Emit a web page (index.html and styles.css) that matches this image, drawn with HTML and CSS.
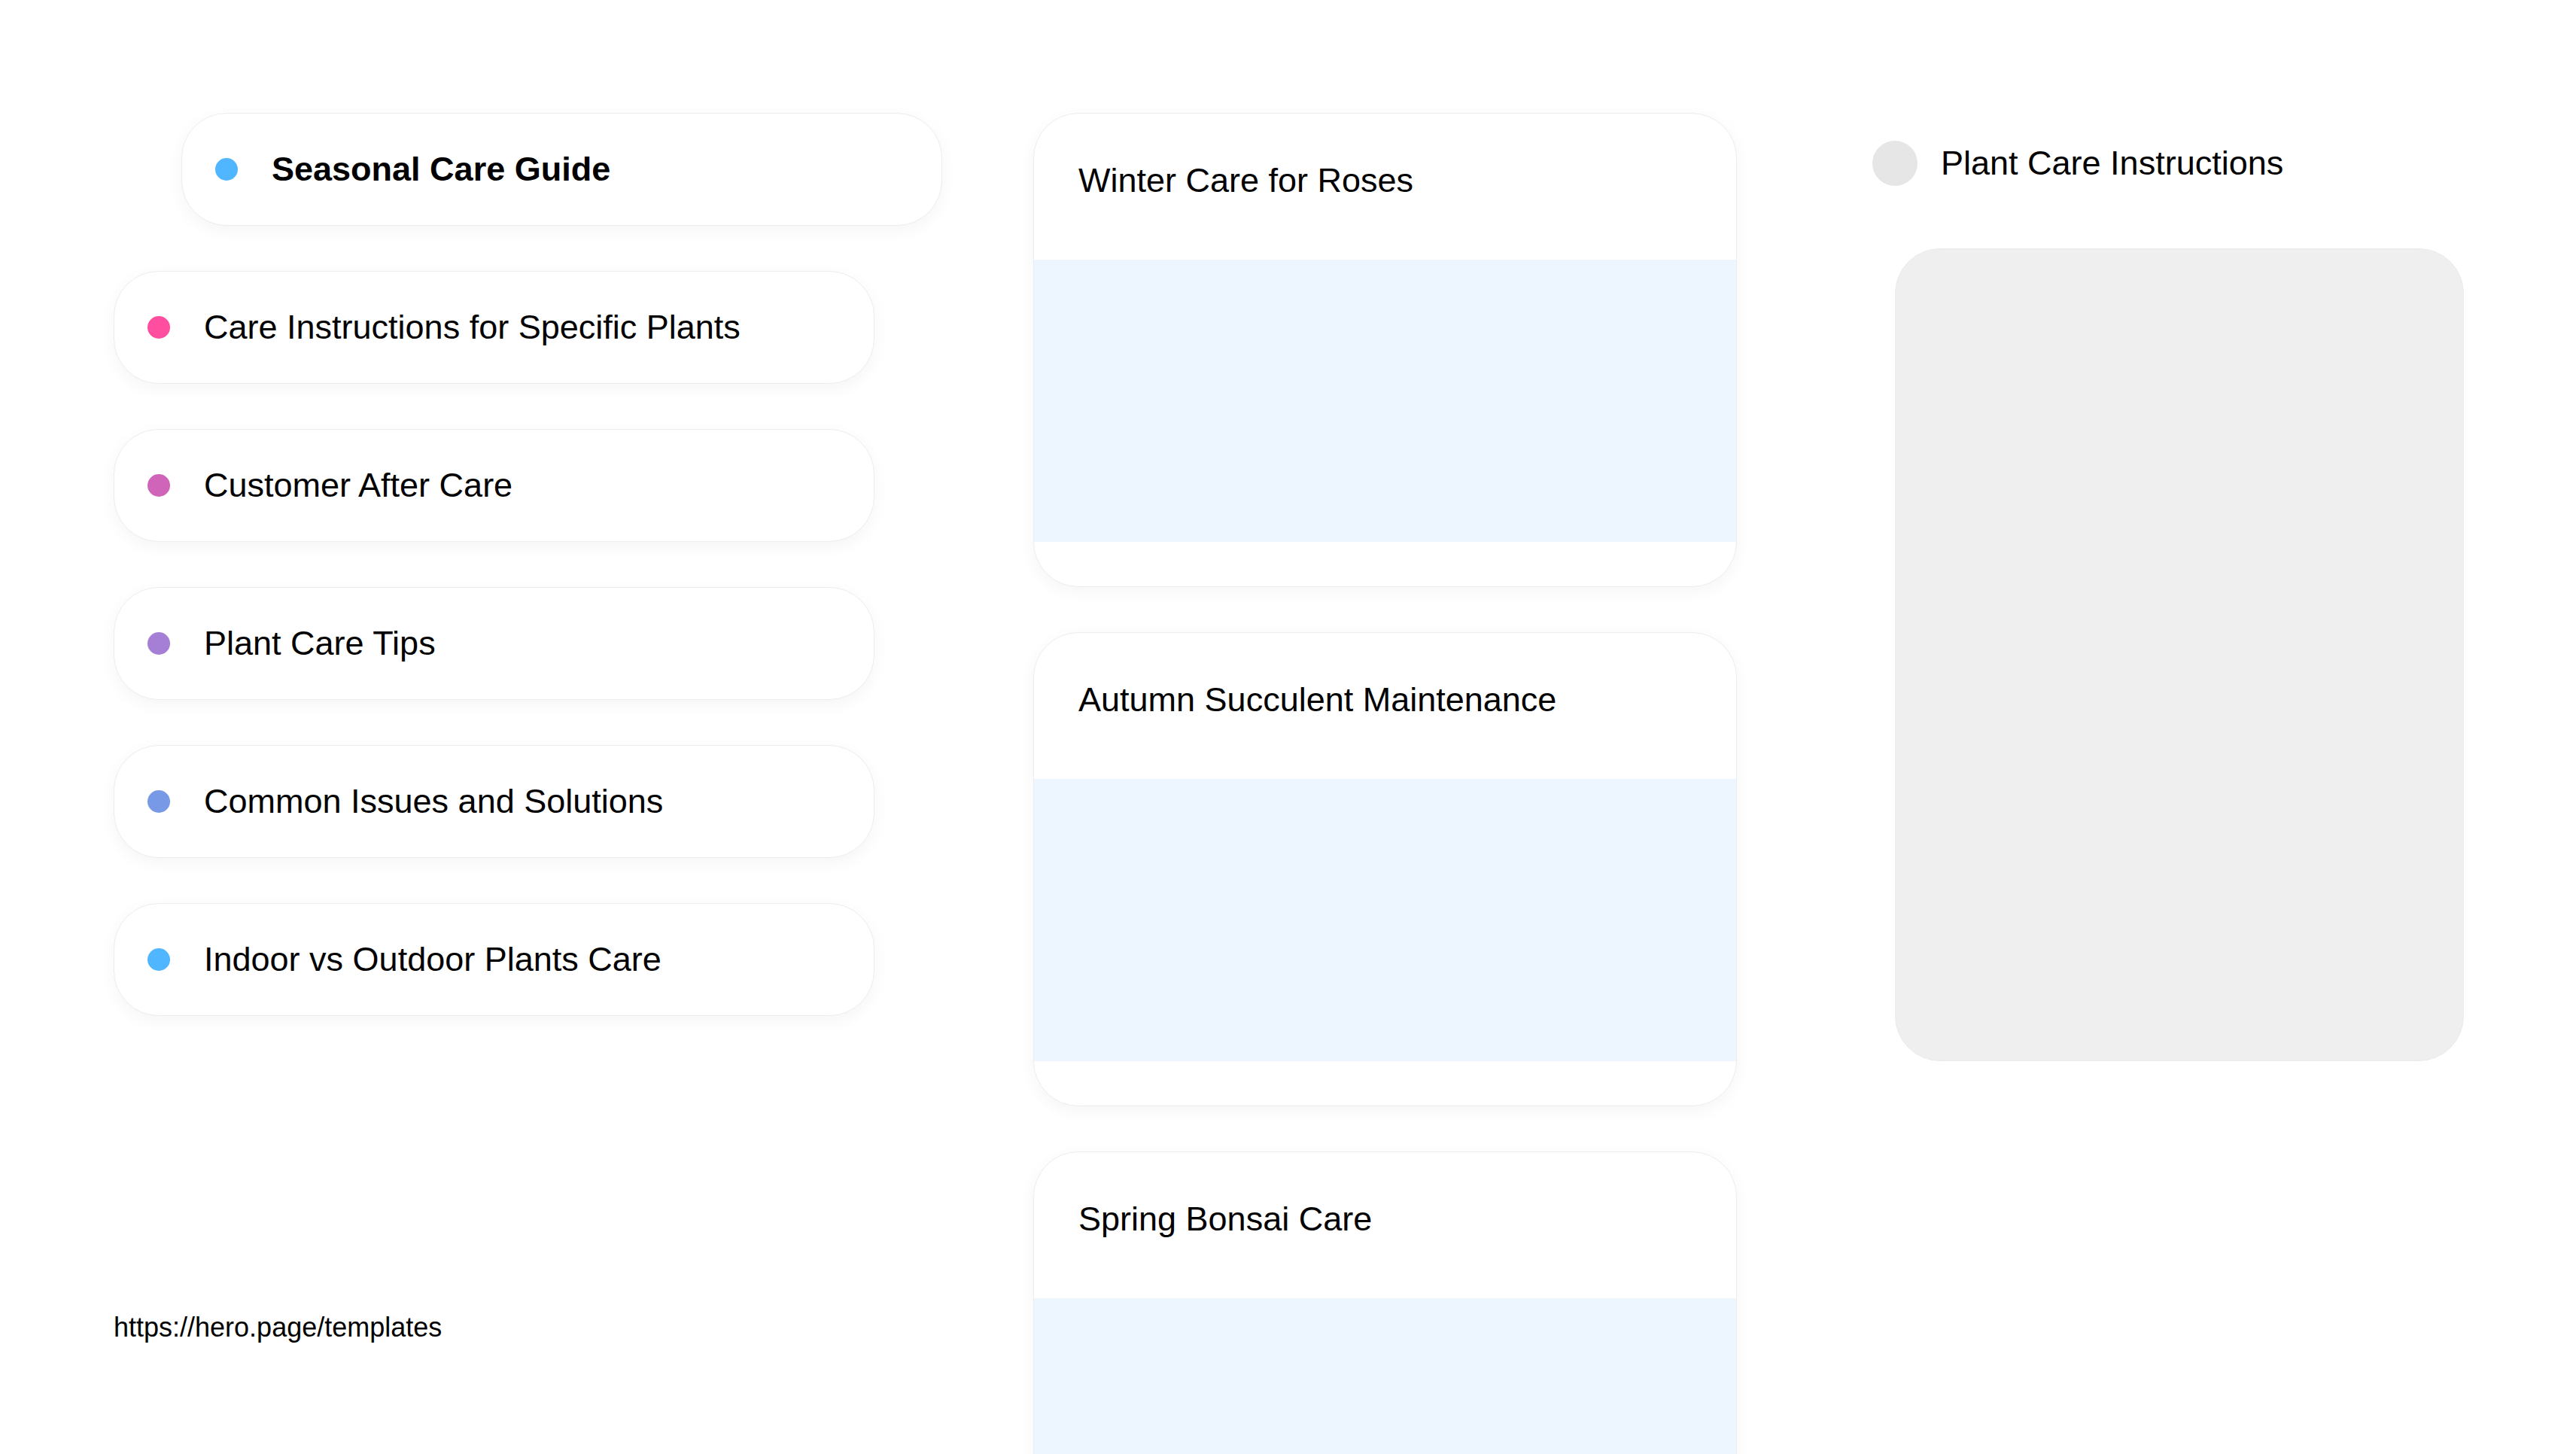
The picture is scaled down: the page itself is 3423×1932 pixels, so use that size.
FILE: index.html
```html
<!DOCTYPE html>
<html lang="en">
<head>
<meta charset="utf-8">
<title>Plant Care</title>
<link rel="stylesheet" href="styles.css">
</head>
<body>
<div class="page">
  <div class="col-left">
    <div class="nav-list">
      <div class="nav-card nav-card--active"><span class="dot dot-blue"></span><span class="nav-label nav-label--bold">Seasonal Care Guide</span></div>
      <div class="nav-card"><span class="dot dot-pink"></span><span class="nav-label">Care Instructions for Specific Plants</span></div>
      <div class="nav-card"><span class="dot dot-magenta"></span><span class="nav-label">Customer After Care</span></div>
      <div class="nav-card"><span class="dot dot-purple"></span><span class="nav-label">Plant Care Tips</span></div>
      <div class="nav-card"><span class="dot dot-periwinkle"></span><span class="nav-label">Common Issues and Solutions</span></div>
      <div class="nav-card"><span class="dot dot-blue"></span><span class="nav-label">Indoor vs Outdoor Plants Care</span></div>
    </div>
    <div class="url">https://hero.page/templates</div>
  </div>
  <div class="col-middle">
    <div class="post-card">
      <div class="post-head">Winter Care for Roses</div>
      <div class="post-media"></div>
      <div class="post-foot"></div>
    </div>
    <div class="post-card">
      <div class="post-head">Autumn Succulent Maintenance</div>
      <div class="post-media"></div>
      <div class="post-foot"></div>
    </div>
    <div class="post-card">
      <div class="post-head">Spring Bonsai Care</div>
      <div class="post-media"></div>
      <div class="post-foot"></div>
    </div>
  </div>
  <div class="col-right">
    <div class="side-head"><span class="avatar"></span><span class="side-title">Plant Care Instructions</span></div>
    <div class="side-panel"></div>
  </div>
</div>
</body>
</html>
```
FILE: styles.css
```css
html, body {
  margin: 0;
  padding: 0;
  background: #ffffff;
  overflow: hidden;
}
body {
  font-family: "Liberation Sans", Arial, sans-serif;
  color: #000000;
}
.page {
  display: flex;
  align-items: flex-start;
  padding: 150px 0 0 151px;
}
.col-left {
  width: 1102px;
  margin-right: 120px;
  display: flex;
  flex-direction: column;
}
.nav-list {
  display: flex;
  flex-direction: column;
  gap: 60px;
}
.nav-card {
  box-sizing: border-box;
  width: 1011px;
  height: 150px;
  display: flex;
  align-items: center;
  gap: 45px;
  padding-left: 44px;
  background: #ffffff;
  border: 1px solid #ededed;
  border-radius: 60px;
  box-shadow: 0 6px 22px rgba(0, 0, 0, 0.045);
}
.nav-card--active {
  margin-left: 90px;
}
.dot {
  flex: none;
  width: 30px;
  height: 30px;
  border-radius: 50%;
}
.dot-blue { background: #4fb6ff; }
.dot-pink { background: #ff4d9f; }
.dot-magenta { background: #d064b8; }
.dot-purple { background: #a57fd5; }
.dot-periwinkle { background: #7799e6; }
.nav-label {
  font-size: 45px;
  line-height: 52px;
  white-space: nowrap;
}
.nav-label--bold {
  font-weight: 700;
}
.url {
  margin-top: 393px;
  font-size: 36px;
  line-height: 41px;
  white-space: nowrap;
}
.col-middle {
  width: 935px;
  margin-right: 180px;
  display: flex;
  flex-direction: column;
  gap: 60px;
}
.post-card {
  box-sizing: border-box;
  height: 630px;
  background: #ffffff;
  border: 1px solid #ededed;
  border-radius: 60px;
  overflow: hidden;
  box-shadow: 0 6px 22px rgba(0, 0, 0, 0.045);
  display: flex;
  flex-direction: column;
}
.post-head {
  box-sizing: border-box;
  height: 194px;
  padding: 63px 60px 0 59px;
  font-size: 45px;
  line-height: 52px;
  white-space: nowrap;
}
.post-media {
  height: 375px;
  background: #edf6fe;
}
.post-foot {
  flex: 1;
}
.col-right {
  width: 786px;
  display: flex;
  flex-direction: column;
}
.side-head {
  margin-top: 37px;
  height: 60px;
  display: flex;
  align-items: center;
  gap: 31px;
}
.avatar {
  flex: none;
  width: 60px;
  height: 60px;
  border-radius: 50%;
  background: #e6e6e6;
}
.side-title {
  font-size: 45px;
  line-height: 52px;
  white-space: nowrap;
}
.side-panel {
  box-sizing: border-box;
  margin: 83px 0 0 30px;
  width: 756px;
  height: 1080px;
  background: #efefef;
  border: 1px solid #ebebeb;
  border-radius: 60px;
}
```
